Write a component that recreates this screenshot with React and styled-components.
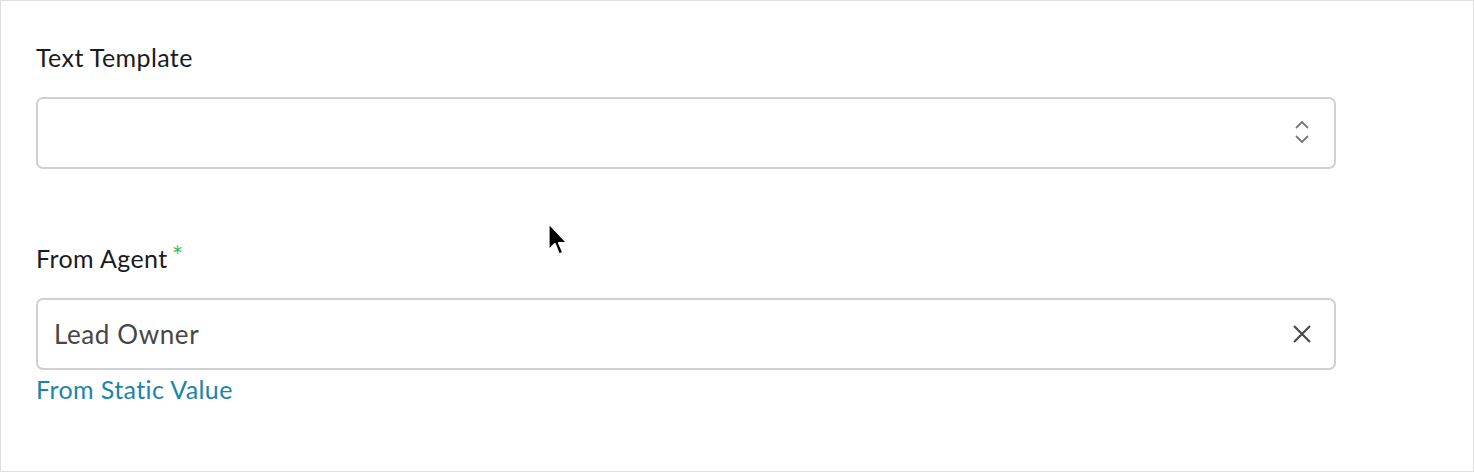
import React from "react";
import styled, { createGlobalStyle } from "styled-components";

const GlobalStyle = createGlobalStyle`
  html, body {
    margin: 0;
    padding: 0;
    background: #fff;
  }
  body {
    font-family: "Lato", "Liberation Sans", sans-serif;
  }
`;

const Frame = styled.div`
  position: relative;
  width: 1474px;
  height: 472px;
  box-sizing: border-box;
  border: 1px solid #dedede;
  padding: 40px 0 0 35px;
  background: #fff;
`;

const Form = styled.form`
  width: 1300px;
  display: flex;
  flex-direction: column;
`;

const Field = styled.div`
  display: flex;
  flex-direction: column;
  margin-bottom: ${props => props.spacing || 0}px;
`;

const Label = styled.label`
  font-size: 25px;
  line-height: 32px;
  color: #1a1b1f;
  margin-bottom: 24px;
  letter-spacing: 0.4px;
`;

const Required = styled.span`
  color: #3dbb5f;
  font-size: 27px;
  vertical-align: top;
  margin-left: 4px;
  line-height: 28px;
`;

const Box = styled.div`
  height: 72px;
  box-sizing: border-box;
  border: 2px solid #cfd0d3;
  border-radius: 7px;
  display: flex;
  align-items: center;
  padding: 0 20px 0 16px;
`;

const Value = styled.span`
  flex: 1;
  font-size: 26px;
  color: #464646;
  letter-spacing: 0.6px;
`;

const IconButton = styled.span`
  display: flex;
  align-items: center;
  justify-content: center;
  width: 24px;
  height: 24px;
  color: ${props => props.tone || "#6b6b6b"};
`;

const Link = styled.a`
  margin-top: 3px;
  font-size: 25px;
  line-height: 32px;
  color: #1b84ad;
  text-decoration: none;
  letter-spacing: 0.4px;
`;

const Cursor = styled.svg`
  position: absolute;
  left: 544px;
  top: 220px;
`;

const Chevrons = () => (
  <svg width="16" height="26" viewBox="0 0 16 26" fill="none">
    <path d="M2 8 L8 2 L14 8" stroke="currentColor" strokeWidth="1.8" />
    <path d="M2 16 L8 22 L14 16" stroke="currentColor" strokeWidth="1.8" />
  </svg>
);

const Close = () => (
  <svg width="20" height="20" viewBox="0 0 20 20" fill="none">
    <path d="M2 2 L18 18 M18 2 L2 18" stroke="currentColor" strokeWidth="2.2" />
  </svg>
);

const App = () => (
  <>
    <GlobalStyle />
    <Frame>
      <Form>
        <Field spacing={73}>
          <Label>Text Template</Label>
          <Box>
            <Value />
            <IconButton tone="#77787c">
              <Chevrons />
            </IconButton>
          </Box>
        </Field>
        <Field>
          <Label>
            From Agent<Required>*</Required>
          </Label>
          <Box>
            <Value>Lead Owner</Value>
            <IconButton tone="#4a4a4a">
              <Close />
            </IconButton>
          </Box>
          <Link href="#">From Static Value</Link>
        </Field>
      </Form>
      <Cursor width="26" height="42" viewBox="0 0 24 40">
        <path
          d="M3 2 L3 28 L9 22 L13 32 L17 30 L13 21 L21 21 Z"
          fill="#000"
          stroke="#fff"
          strokeWidth="2"
          strokeLinejoin="round"
        />
      </Cursor>
    </Frame>
  </>
);

export default App;
